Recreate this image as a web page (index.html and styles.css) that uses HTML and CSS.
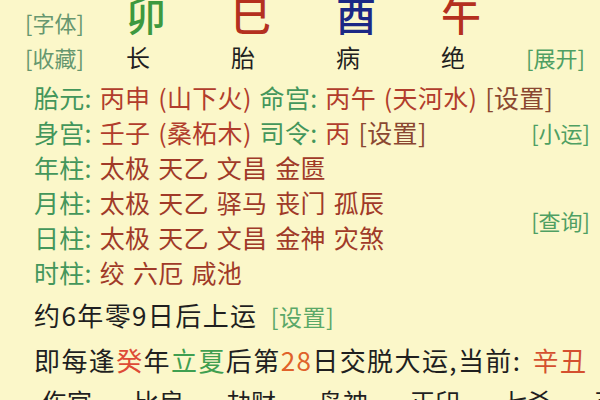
FILE: index.html
```html
<!DOCTYPE html>
<html lang="zh-CN">
<head>
<meta charset="utf-8">
<title>八字排盘</title>
<link rel="stylesheet" href="styles.css">
</head>
<body>
<div class="page">
  <div class="pillars">
    <span class="tag tag-top">[字体]</span>
    <span class="big c-green">卯</span>
    <span class="big c-red">巳</span>
    <span class="big c-navy">酉</span>
    <span class="big c-red">午</span>
    <span></span>
    <span class="tag">[收藏]</span>
    <span class="stage">长</span>
    <span class="stage">胎</span>
    <span class="stage">病</span>
    <span class="stage">绝</span>
    <span class="tag tag-open">[展开]</span>
  </div>

  <div class="info">
    <div class="line"><span class="lbl">胎元:</span> <span class="val">丙申 (山下火)</span> <span class="lbl">命宫:</span> <span class="val">丙午 (天河水)</span> <span class="set">[设置]</span></div>
    <div class="line split"><span><span class="lbl">身宫:</span> <span class="val">壬子 (桑柘木)</span> <span class="lbl">司令:</span> <span class="val">丙</span> <span class="set">[设置]</span></span><span class="tag-side">[小运]</span></div>
    <div class="line"><span class="lbl">年柱:</span> <span class="star">太极 天乙 文昌 金匮</span></div>
    <div class="pair">
      <div>
        <div class="line"><span class="lbl">月柱:</span> <span class="star">太极 天乙 驿马 丧门 孤辰</span></div>
        <div class="line"><span class="lbl">日柱:</span> <span class="star">太极 天乙 文昌 金神 灾煞</span></div>
      </div>
      <span class="tag-side">[查询]</span>
    </div>
    <div class="line"><span class="lbl">时柱:</span> <span class="star">绞 六厄 咸池</span></div>
  </div>

  <div class="luck">约6年零9日后上运 <span class="set-green">[设置]</span></div>
  <div class="luck">即每逢<span class="c-hot">癸</span>年<span class="c-jie">立夏</span>后第<span class="c-num">28</span>日交脱大运,当前: <span class="c-cur">辛丑</span></div>

  <div class="gods">
    <span>伤官</span><span>比肩</span><span>劫财</span><span>枭神</span><span>正印</span><span>七杀</span><span>正</span>
  </div>
</div>
</body>
</html>
```

FILE: styles.css
```css
html, body {
  margin: 0;
  padding: 0;
  width: 600px;
  height: 400px;
  overflow: hidden;
  background: #fbf7c9;
}

.page {
  font-family: "Noto Sans CJK SC", "Noto Sans", sans-serif;
  color: #1f1f1f;
  width: 600px;
  height: 400px;
  overflow: hidden;
}

.pillars {
  display: grid;
  grid-template-columns: 101px 105px 105px 105px 89px 65px;
  grid-template-rows: 40px 34px;
  row-gap: 6px;
  padding-left: 25px;
  margin-top: -6px;
}

.tag {
  font-size: 22px;
  line-height: 34px;
  color: #67976f;
}

.tag-top {
  align-self: end;
  line-height: 24px;
}

.tag-open {
  color: #4f9f63;
  margin-left: -4px;
}

.big {
  font-size: 40px;
  line-height: 40px;
  font-weight: 500;
}

.stage {
  font-size: 24px;
  line-height: 34px;
  color: #1f1f1f;
}

.c-green { color: #3d993f; }
.c-red { color: #b4301f; }
.c-navy { color: #1b2885; }

.info {
  margin-top: 6px;
  padding-left: 34px;
  padding-right: 10px;
}

.line {
  font-size: 25px;
  line-height: 35px;
  white-space: nowrap;
  word-spacing: 2px;
  letter-spacing: 0.3px;
}

.split {
  display: flex;
  justify-content: space-between;
}

.pair {
  display: flex;
  justify-content: space-between;
  align-items: center;
}

.lbl { color: #43965b; }
.val { color: #b13d2c; }
.star { color: #a03a28; }
.set { color: #8a4731; }

.tag-side {
  font-size: 22px;
  color: #4f9f63;
  white-space: nowrap;
  letter-spacing: 0;
  word-spacing: 0;
}

.luck {
  font-size: 26px;
  line-height: 44px;
  padding-left: 34px;
  white-space: nowrap;
  letter-spacing: 1.4px;
  color: #1f1f1f;
}

.info + .luck {
  margin-top: 3px;
}

.set-green {
  font-size: 23px;
  color: #5aa868;
  margin-left: 6px;
  letter-spacing: 0.5px;
}

.c-hot { color: #de4b36; }
.c-jie { color: #3f9f50; }
.c-num { color: #e0622a; }
.c-cur { color: #d4502f; margin-left: 4px; }

.gods {
  display: flex;
  padding-left: 42px;
  font-size: 25px;
  line-height: 38px;
  white-space: nowrap;
  color: #1f1f1f;
}

.gods span {
  width: 92px;
  flex: none;
}
```
